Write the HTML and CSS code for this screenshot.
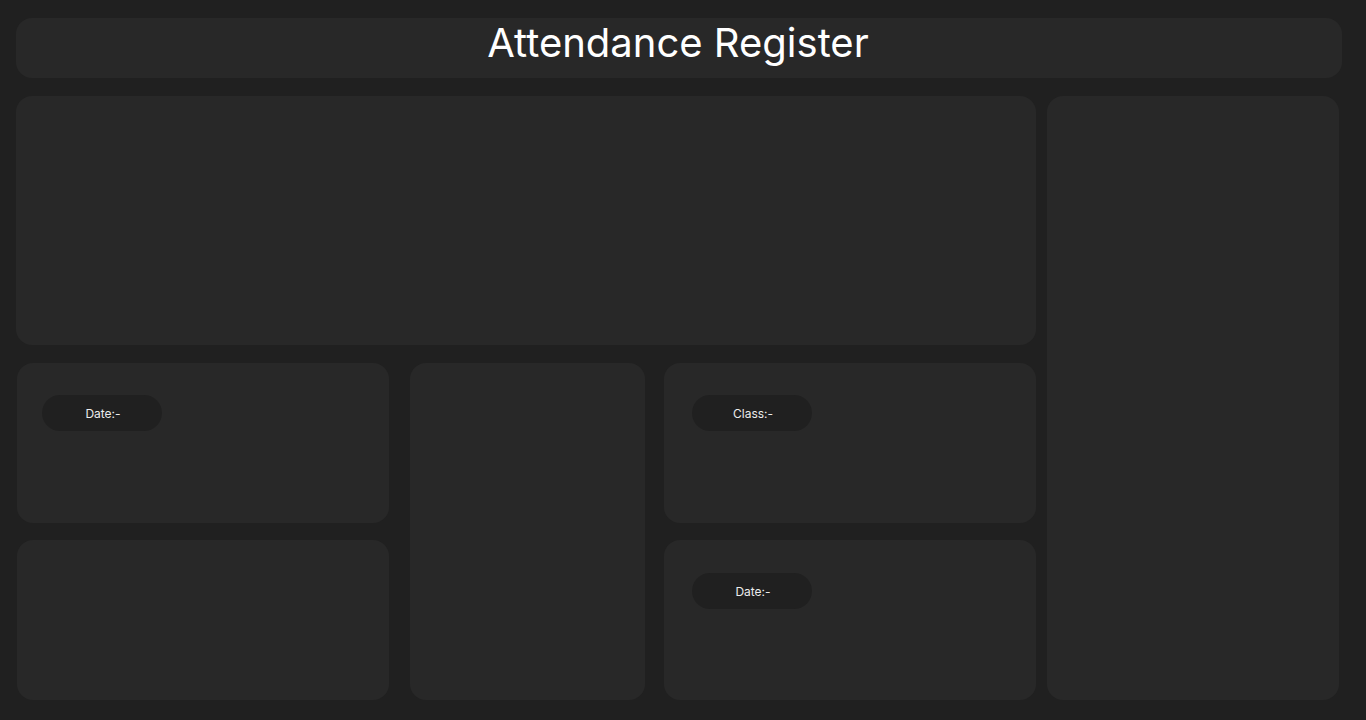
FILE: index.html
```html
<!DOCTYPE html>
<html lang="en">
<head>
<meta charset="utf-8">
<title>Attendance Register</title>
<link rel="stylesheet" href="styles.css">
</head>
<body>
<header class="header"><h1 class="title">Attendance Register</h1></header>
<main class="layout">
  <section class="left">
    <div class="card banner"></div>
    <div class="lower">
      <div class="col-a">
        <div class="card small pad-a"><span class="pill">Date:-</span></div>
        <div class="card small"></div>
      </div>
      <div class="card middle"></div>
      <div class="col-c">
        <div class="card small pad-c"><span class="pill">Class:-</span></div>
        <div class="card small pad-d"><span class="pill">Date:-</span></div>
      </div>
    </div>
  </section>
  <aside class="card side"></aside>
</main>
</body>
</html>
```
FILE: styles.css
```css
html, body {
  margin: 0;
  padding: 0;
  background: #202020;
  height: 720px;
  overflow: hidden;
  font-family: Inter, "Noto Sans", sans-serif;
}
.header {
  margin: 18px 24px 0 16px;
  height: 60px;
  background: #282828;
  border-radius: 16px;
  display: flex;
  align-items: center;
  justify-content: center;
}
.title {
  margin: 0;
  font-weight: 400;
  font-size: 40px;
  color: #ffffff;
  line-height: 1;
  transform: translate(-1px, -5px);
}
.layout {
  margin: 18px 27px 0 16px;
  display: flex;
  gap: 11px;
  height: 604px;
}
.card {
  background: #282828;
  border-radius: 16px;
  box-sizing: border-box;
}
.left {
  width: 1020px;
  display: flex;
  flex-direction: column;
  gap: 18px;
}
.banner { height: 249px; }
.lower {
  display: flex;
  height: 337px;
}
.col-a, .col-c {
  width: 372px;
  display: flex;
  flex-direction: column;
  gap: 17px;
}
.col-a { margin-left: 1px; }
.middle {
  width: 235px;
  margin-left: 21px;
  margin-right: 19px;
}
.small { height: 160px; }
.pad-a { padding: 32px 0 0 25px; }
.pad-c { padding: 32px 0 0 28px; }
.pad-d { padding: 33px 0 0 28px; }
.side { width: 292px; }
.pill {
  display: flex;
  align-items: center;
  justify-content: center;
  width: 120px;
  height: 36px;
  border-radius: 18px;
  background: #202020;
  color: #ececec;
  font-size: 12px;
  padding-left: 2px;
  box-sizing: border-box;
}
```
